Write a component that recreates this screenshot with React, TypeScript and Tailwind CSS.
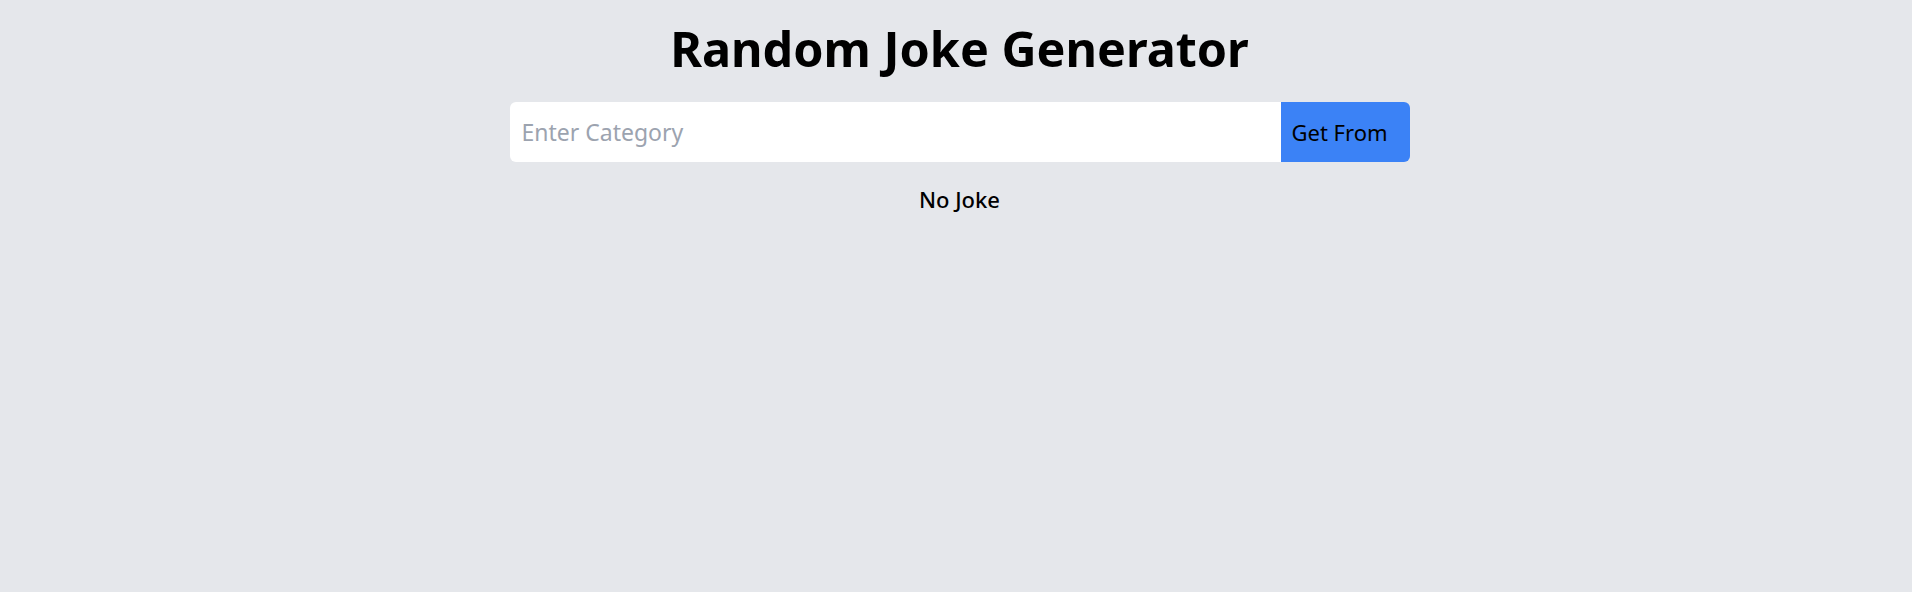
import React from "react";

export default function App() {
  return (
    <div className="min-h-[592px] w-full bg-[#e5e7eb] text-black" style={{ fontFamily: '"Noto Sans", "Open Sans", sans-serif' }}>
      <div className="flex flex-col items-center pl-[7px] pt-[20px]">
        <h1 className="text-[48.5px] leading-[56px] font-bold">Random Joke Generator</h1>
        <div className="mt-[26px] flex w-[900px]">
          <input
            className="h-[60px] flex-1 rounded-l-md bg-white px-[12px] text-[23px] placeholder:text-[#9ca3af] outline-none"
            placeholder="Enter Category"
          />
          <button className="h-[60px] w-[129px] rounded-r-md bg-[#3b82f6] pl-[11px] text-left text-[22px] text-black">Get From</button>
        </div>
        <p className="mt-[21px] text-[22px] font-medium">No Joke</p>
      </div>
    </div>
  );
}
